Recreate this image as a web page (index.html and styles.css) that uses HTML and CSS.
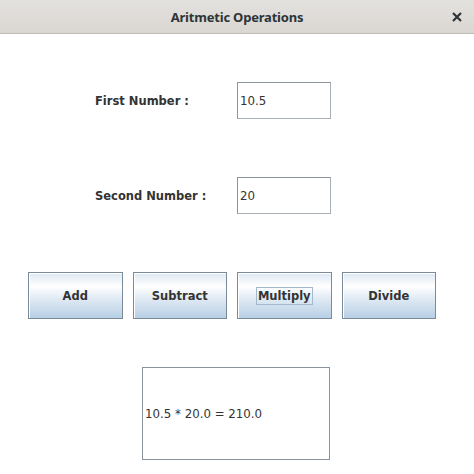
FILE: index.html
```html
<!DOCTYPE html>
<html lang="en">
<head>
    <meta charset="UTF-8">
    <title>Aritmetic Operations</title>
    <link rel="stylesheet" href="styles.css">
</head>
<body>

<div class="window">
    <div class="titlebar">
        <span class="title">Aritmetic Operations</span>
        <svg class="close" width="10" height="10" viewBox="0 0 10 10">
            <path d="M1 1 L9 9 M9 1 L1 9" stroke="#2e3436" stroke-width="2.2" fill="none"/>
        </svg>
    </div>

    <div class="content">
        <div class="row row-first">
            <label class="label" for="firstNumber">First Number :</label>
            <div class="field" id="firstNumber">10.5</div>
        </div>
        <div class="row row-second">
            <label class="label" for="secondNumber">Second Number :</label>
            <div class="field" id="secondNumber">20</div>
        </div>

        <div class="buttons">
            <button class="btn">Add</button>
            <button class="btn">Subtract</button>
            <button class="btn focused"><span class="focus-ring">Multiply</span></button>
            <button class="btn">Divide</button>
        </div>

        <div class="result">10.5 * 20.0 = 210.0</div>
    </div>
</div>

</body>
</html>
```

FILE: styles.css
```css
html, body {
    margin: 0;
    padding: 0;
    background: #ffffff;
}
.window {
    width: 474px;
    height: 474px;
    background: #ffffff;
    font-family: "DejaVu Sans", sans-serif;
    font-size: 11.8px;
    color: #333333;
}
.titlebar {
    height: 33px;
    border-bottom: 1px solid #c0bcb8;
    background: linear-gradient(#e3e1de, #dad7d3);
    display: flex;
    align-items: center;
    justify-content: center;
    position: relative;
}
.title {
    font-family: "Noto Sans", sans-serif;
    font-weight: 700;
    font-size: 13px;
    letter-spacing: -0.2px;
    color: #2e3436;
}
.close {
    position: absolute;
    left: 452px;
    top: 12px;
}
.content {
    padding-top: 48px;
}
.row {
    display: flex;
    align-items: center;
    height: 37px;
    padding-left: 95px;
}
.row-second {
    margin-top: 58px;
}
.label {
    width: 142px;
    font-weight: 700;
    font-size: 11.5px;
}
.field {
    box-sizing: border-box;
    width: 94px;
    height: 37px;
    border: 1px solid #8a949e;
    border-right-color: #a8b0b8;
    border-bottom-color: #a8b0b8;
    padding-left: 2px;
    display: flex;
    align-items: center;
}
.buttons {
    display: flex;
    gap: 10px;
    margin-top: 58px;
    padding-left: 28px;
}
.btn {
    box-sizing: border-box;
    width: 94.5px;
    height: 47px;
    border: 1px solid #7a8a99;
    box-shadow: inset 1px 1px 0 #ffffff;
    background: linear-gradient(#dde8f3 0%, #ffffff 30%, #dde8f3 60%, #b8cfe5 100%);
    font-family: "DejaVu Sans", sans-serif;
    font-size: 11.5px;
    font-weight: 700;
    color: #333333;
    padding: 0;
}
.focus-ring {
    border: 1px solid #a3b8cc;
    padding: 1px 1px;
}
.result {
    box-sizing: border-box;
    width: 188px;
    height: 93px;
    margin: 48px 0 0 142px;
    border: 1px solid #8a949e;
    padding-left: 2px;
    display: flex;
    align-items: center;
}
```
